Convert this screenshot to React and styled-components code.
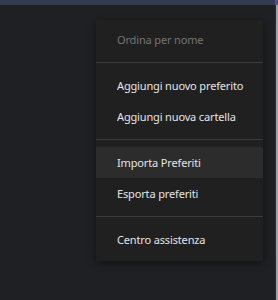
import React from "react";
import styled, { createGlobalStyle } from "styled-components";

const GlobalStyle = createGlobalStyle`
  html, body {
    margin: 0;
    padding: 0;
    background: #1e2023;
  }
  body {
    font-family: "Noto Sans", "Open Sans", sans-serif;
  }
`;

const Page = styled.div`
  width: 278px;
  height: 300px;
  display: flex;
  flex-direction: column;
  background: #1e2023;
  overflow: hidden;
`;

const TopBar = styled.div`
  height: 5px;
  flex-shrink: 0;
  display: flex;
  background: #313c52;
`;

const TopFill = styled.div`
  flex: 1;
`;

const TopAccent = styled.div`
  width: 3px;
  background: #5b4a9a;
`;

const Body = styled.div`
  flex: 1;
  display: flex;
`;

const Stage = styled.div`
  flex: 1;
  padding: 15px 0 0 96px;
`;

const EdgeStrip = styled.div`
  width: 2px;
  background: #9ea2a8;
  border-left: 1px solid #2a2c30;
`;

const Menu = styled.div`
  width: 167px;
  background: #202020;
  padding: 4px 0 6px;
  box-shadow: 0 2px 8px rgba(0, 0, 0, 0.45);
`;

const Item = styled.div`
  height: 31px;
  display: flex;
  align-items: center;
  padding-left: 21px;
  font-size: 11px;
  letter-spacing: -0.15px;
  color: ${(p) => (p.disabled ? "#747474" : "#e4e4e4")};
  background: ${(p) => (p.active ? "#2c2c2c" : "transparent")};
  white-space: nowrap;
`;

const Separator = styled.div`
  height: 1px;
  margin: 7px 0;
  background: #3a3a3a;
`;

export default function App() {
  return (
    <Page>
      <GlobalStyle />
      <TopBar>
        <TopFill />
        <TopAccent />
      </TopBar>
      <Body>
        <Stage>
          <Menu>
            <Item disabled>Ordina per nome</Item>
            <Separator />
            <Item>Aggiungi nuovo preferito</Item>
            <Item>Aggiungi nuova cartella</Item>
            <Separator />
            <Item active>Importa Preferiti</Item>
            <Item>Esporta preferiti</Item>
            <Separator />
            <Item>Centro assistenza</Item>
          </Menu>
        </Stage>
        <EdgeStrip />
      </Body>
    </Page>
  );
}
